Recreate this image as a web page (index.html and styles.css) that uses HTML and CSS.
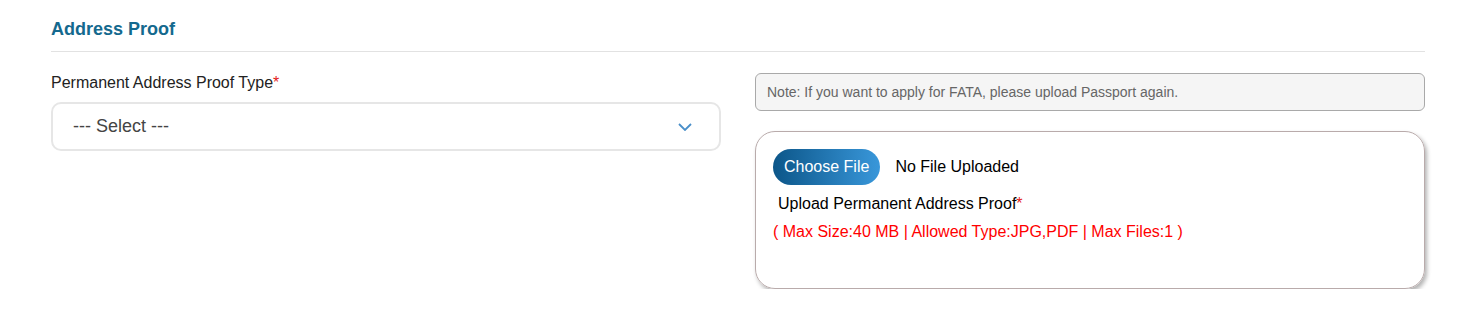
FILE: index.html
```html
<!DOCTYPE html>
<html lang="en">
<head>
    <meta charset="UTF-8">
    <meta name="viewport" content="width=device-width, initial-scale=1.0">
    <title>Address Proof</title>
    <link rel="stylesheet" href="styles.css">
</head>
<body>
    <div class="section">
        <h3 class="section-title">Address Proof</h3>
        <div class="row">
            <div class="col">
                <label class="field-label">Permanent Address Proof Type<span class="req">*</span></label>
                <div class="select-box">
                    <span class="select-text">--- Select ---</span>
                    <svg class="chevron" width="14" height="8" viewBox="0 0 14 8">
                        <path d="M1 1 L7 7 L13 1" fill="none" stroke="#4a8fc9" stroke-width="1.8"/>
                    </svg>
                </div>
            </div>
            <div class="col">
                <div class="note">Note: If you want to apply for FATA, please upload Passport again.</div>
                <div class="upload-card">
                    <div class="file-row">
                        <span class="choose-btn">Choose File</span>
                        <span class="file-status">No File Uploaded</span>
                    </div>
                    <div class="upload-label">Upload Permanent Address Proof<span class="req">*</span></div>
                    <div class="upload-hint">( Max Size:40 MB | Allowed Type:JPG,PDF | Max Files:1 )</div>
                </div>
            </div>
        </div>
    </div>
</body>
</html>
```

FILE: styles.css
```css
/* Address proof form */
body {
    margin: 0;
    font-family: "Liberation Sans", Arial, sans-serif;
    background-color: #fff;
    color: #000;
}

.section {
    padding: 19px 54px 0 51px;
}

.section-title {
    margin: 0;
    font-size: 18px;
    font-weight: bold;
    color: #14698e;
    padding-bottom: 11px;
    border-bottom: 1px solid #e2e2e2;
}

.row {
    display: flex;
    gap: 34px;
}

.col {
    flex: 1;
}

.field-label {
    display: block;
    margin-top: 22px;
    font-size: 16px;
    color: #222;
}

.req {
    color: #e31b1b;
}

.select-box {
    margin-top: 10px;
    height: 45px;
    border: 2px solid #e6e6e6;
    border-radius: 10px;
    display: flex;
    align-items: center;
    justify-content: space-between;
    padding: 0 27px 0 20px;
}

.select-text {
    font-size: 18px;
    color: #444;
}

.note {
    margin-top: 21px;
    height: 38px;
    box-sizing: border-box;
    border: 1px solid #a9a9a9;
    border-radius: 6px;
    background-color: #f5f5f5;
    font-size: 14px;
    color: #666;
    padding: 0 11px;
    display: flex;
    align-items: center;
}

.upload-card {
    margin-top: 20px;
    height: 158px;
    box-sizing: border-box;
    border: 1px solid #b9abab;
    border-radius: 20px;
    box-shadow: 2px 3px 4px rgba(0, 0, 0, 0.3);
    padding: 17px 17px 0 17px;
}

.file-row {
    display: flex;
    align-items: center;
    gap: 15px;
}

.choose-btn {
    display: inline-block;
    height: 36px;
    line-height: 36px;
    padding: 0 11px;
    border-radius: 18px;
    background: linear-gradient(to right, #0c5689, #3997da);
    color: #fff;
    font-size: 16px;
}

.file-status {
    font-size: 16px;
}

.upload-label {
    margin-top: 10px;
    padding-left: 5px;
    font-size: 16px;
}

.upload-hint {
    margin-top: 10px;
    font-size: 16px;
    color: #f00;
}
```
